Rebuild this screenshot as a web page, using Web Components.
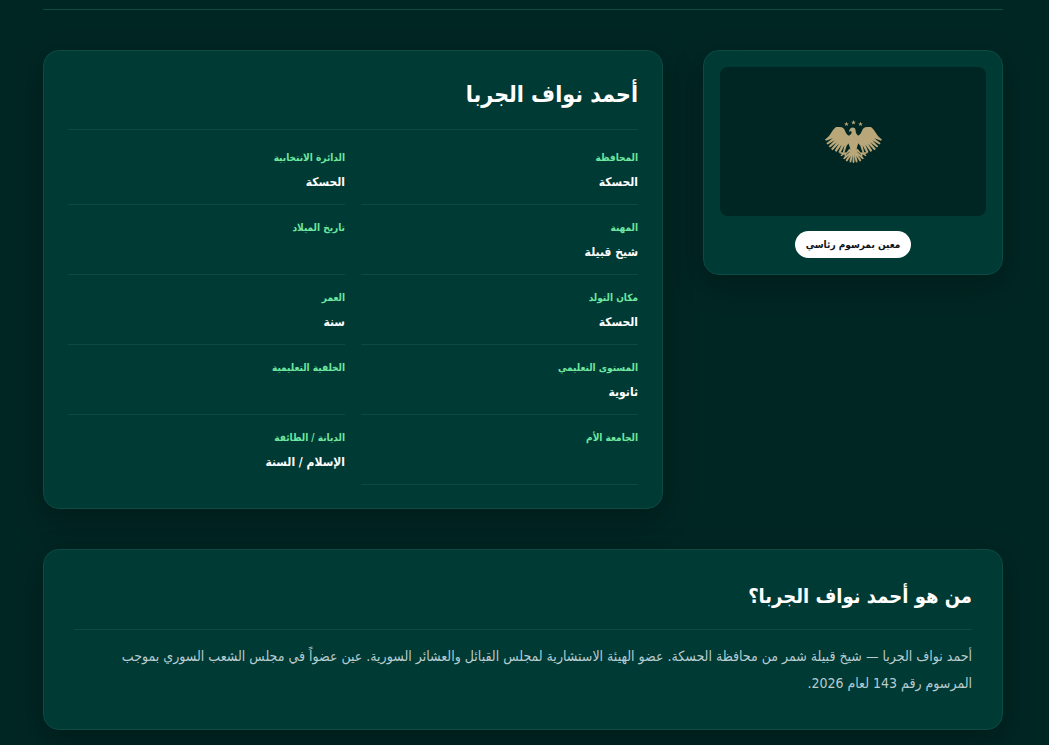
<!DOCTYPE html>
<html lang="ar" dir="rtl">
<head>
<meta charset="utf-8">
<meta name="viewport" content="width=device-width, initial-scale=1">
<title>أحمد نواف الجربا</title>
<style>
    :root {
        --page: #002623;
        --card: #003a34;
        --line: #0c4a42;
        --green: #6ee7a0;
        --gold: #b9a779;
        --white: #ffffff;
        --body-text: #b8ccd0;
    }

    body {
        margin: 0;
        background-color: var(--page);
        color: var(--white);
        font-family: "DejaVu Sans Condensed", "DejaVu Sans", sans-serif;
    }
</style>
</head>
<body>
<member-page>
    <member-photo slot="side" status="معين بمرسوم رئاسي"></member-photo>
    <member-card slot="main" heading="أحمد نواف الجربا">
        <info-field label="المحافظة">الحسكة</info-field>
        <info-field label="الدائرة الانتخابية">الحسكة</info-field>
        <info-field label="المهنة">شيخ قبيلة</info-field>
        <info-field label="تاريخ الميلاد"></info-field>
        <info-field label="مكان التولد">الحسكة</info-field>
        <info-field label="العمر">سنة</info-field>
        <info-field label="المستوى التعليمي">ثانوية</info-field>
        <info-field label="الخلفية التعليمية"></info-field>
        <info-field label="الجامعة الأم"></info-field>
        <info-field label="الديانة / الطائفة">الإسلام / السنة</info-field>
    </member-card>
    <member-bio heading="من هو أحمد نواف الجربا؟">أحمد نواف الجربا — شيخ قبيلة شمر من محافظة الحسكة. عضو الهيئة الاستشارية لمجلس القبائل والعشائر السورية. عين عضواً في مجلس الشعب السوري بموجب المرسوم رقم 143 لعام 2026.</member-bio>
</member-page>

<script>
    const cardCSS = `
        :host {
            display: block;
            box-sizing: border-box;
            background-color: var(--card);
            border: 1px solid var(--line);
            border-radius: 16px;
            box-shadow: 0 10px 30px rgba(0, 0, 0, 0.25);
        }
    `;

    class MemberPage extends HTMLElement {
        constructor() {
            super();
            this.attachShadow({mode: 'open'});
        }

        connectedCallback() {
            this.shadowRoot.innerHTML = `
                <style>
                    :host {
                        display: block;
                        padding: 9px 46px 15px 43px;
                    }

                    main {
                        display: flex;
                        flex-direction: column;
                        gap: 40px;
                        max-width: 960px;
                        margin: 0 auto;
                        padding-top: 40px;
                        border-top: 1px solid var(--line);
                    }

                    .columns {
                        display: grid;
                        grid-template-columns: 300px 1fr;
                        align-items: start;
                        gap: 40px;
                    }

                    @media (max-width: 760px) {
                        .columns {
                            grid-template-columns: 1fr;
                        }
                    }
                </style>
                <main>
                    <div class="columns">
                        <slot name="side"></slot>
                        <slot name="main"></slot>
                    </div>
                    <slot></slot>
                </main>
            `;
        }
    }

    class StateEagle extends HTMLElement {
        constructor() {
            super();
            this.attachShadow({mode: 'open'});
        }

        connectedCallback() {
            this.shadowRoot.innerHTML = `
                <style>
                    :host {
                        display: block;
                        color: var(--gold);
                    }

                    svg {
                        display: block;
                        width: 57px;
                        height: 43px;
                    }
                </style>
                <svg viewBox="44 32 170 128" fill="currentColor" aria-hidden="true">
                    <defs>
                        <path id="star" d="M0-7 2-2 7-2 3 1 4.5 6 0 3-4.5 6-3 1-7-2-2-2Z"/>
                        <g id="wing">
                            <path d="M120 80 C113 79 108 75 105 67 C101 57 97 53 88 53 L77 53 C71 57 67 63 62 71 C58 78 52 85 44 90 L47 94 L67 86 L48 101 L52 105 L73 92 L55 110 L59 114 L79 98 L62 118 L67 122 L86 102 L73 123 L78 127 L94 105 L84 128 L90 130 L102 107 L97 129 L102 129 L109 108 L118 98 Z"/>
                            <path d="M117 117 L108 129 L101 128 L88 128 L87 131 L95 133 L90 137 L93 140 L102 134 L103 141 L107 140 L108 134 L120 124 Z"/>
                            <path d="M120 116 L117 128 L101 142 L98 147 L102 149 L116 137 L107 149 L106 154 L110 156 L121 139 L117 153 L118 159 L122 158 L127 140 L129 122 Z"/>
                        </g>
                    </defs>
                    <use href="#star" x="108" y="44"/>
                    <use href="#star" x="129" y="39"/>
                    <use href="#star" x="150" y="44"/>
                    <use href="#wing"/>
                    <use href="#wing" transform="matrix(-1 0 0 1 258 0)"/>
                    <path d="M116 63 L121 56 C126 52 134 54 135 61 C135 70 139 78 146 80 L143 102 L138 118 L131 130 L132 157 L129 161 L126 157 L127 130 L120 118 L114 102 L112 80 C120 78 125 72 123 66 L118 65 L115 69 Z"/>
                </svg>
            `;
        }
    }

    class MemberPhoto extends HTMLElement {
        constructor() {
            super();
            this.attachShadow({mode: 'open'});
        }

        connectedCallback() {
            this.shadowRoot.innerHTML = `
                <style>
                    ${cardCSS}

                    :host {
                        padding: 16px;
                    }

                    .photo {
                        display: grid;
                        place-items: center;
                        aspect-ratio: 266 / 149;
                        margin-bottom: 15px;
                        background-color: var(--page);
                        border-radius: 8px;
                    }

                    .status {
                        width: fit-content;
                        margin: 0 auto;
                        padding: 0 11px;
                        border-radius: 14px;
                        background-color: var(--white);
                        color: #101418;
                        font-size: 10px;
                        font-weight: bold;
                        line-height: 27px;
                    }
                </style>
                <div class="photo"><state-eagle></state-eagle></div>
                <div class="status">${this.getAttribute('status')}</div>
            `;
        }
    }

    class MemberCard extends HTMLElement {
        constructor() {
            super();
            this.attachShadow({mode: 'open'});
        }

        connectedCallback() {
            this.shadowRoot.innerHTML = `
                <style>
                    ${cardCSS}

                    :host {
                        padding: 24px 24px 23px;
                    }

                    h1 {
                        margin: 0 0 5px;
                        padding-bottom: 16px;
                        border-bottom: 1px solid var(--line);
                        font-size: 23px;
                        line-height: 38px;
                    }

                    .fields {
                        display: grid;
                        grid-template-columns: 1fr 1fr;
                        column-gap: 16px;
                    }

                    ::slotted(:last-child) {
                        border-bottom: none;
                    }
                </style>
                <h1>${this.getAttribute('heading')}</h1>
                <div class="fields"><slot></slot></div>
            `;
        }
    }

    class InfoField extends HTMLElement {
        constructor() {
            super();
            this.attachShadow({mode: 'open'});
        }

        connectedCallback() {
            this.shadowRoot.innerHTML = `
                <style>
                    :host {
                        display: block;
                        padding: 13px 0 10px;
                        border-bottom: 1px solid var(--line);
                    }

                    dl,
                    dd {
                        margin: 0;
                    }

                    dt {
                        color: var(--green);
                        font-size: 10px;
                        font-weight: bold;
                        line-height: 20px;
                    }

                    dd {
                        min-height: 24px;
                        margin-top: 2px;
                        font-size: 12px;
                        font-weight: bold;
                        line-height: 24px;
                    }
                </style>
                <dl>
                    <dt>${this.getAttribute('label')}</dt>
                    <dd><slot></slot></dd>
                </dl>
            `;
        }
    }

    class MemberBio extends HTMLElement {
        constructor() {
            super();
            this.attachShadow({mode: 'open'});
        }

        connectedCallback() {
            this.shadowRoot.innerHTML = `
                <style>
                    ${cardCSS}

                    :host {
                        padding: 30px 30px 32px;
                    }

                    h2 {
                        margin: 0 0 13px;
                        padding-bottom: 16px;
                        border-bottom: 1px solid var(--line);
                        font-size: 20px;
                        line-height: 33px;
                    }

                    p {
                        margin: 0;
                        color: var(--body-text);
                        font-size: 14px;
                        line-height: 27px;
                    }
                </style>
                <h2>${this.getAttribute('heading')}</h2>
                <p><slot></slot></p>
            `;
        }
    }

    customElements.define('member-page', MemberPage);
    customElements.define('state-eagle', StateEagle);
    customElements.define('member-photo', MemberPhoto);
    customElements.define('member-card', MemberCard);
    customElements.define('info-field', InfoField);
    customElements.define('member-bio', MemberBio);
</script>
</body>
</html>
